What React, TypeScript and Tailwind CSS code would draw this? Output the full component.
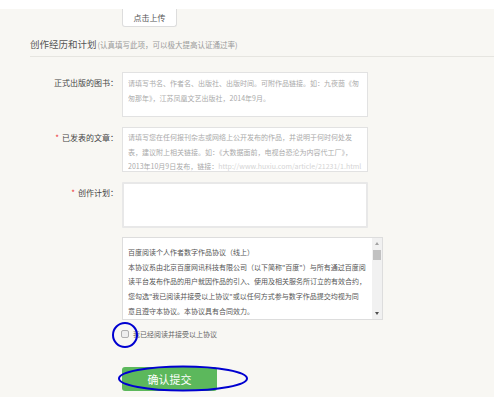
import React from 'react';

const Label: React.FC<{ text: string; required?: boolean }> = ({ text, required }) => (
    <div className="w-[118px] shrink-0 text-right pt-[6px] text-[8px] leading-[10px] text-[#444]">
        {required && <span className="text-[#e33] mr-[3px]">*</span>}
        {text}
    </div>
);

const Lines: React.FC<{ lines: React.ReactNode[] }> = ({ lines }) => (
    <>
        {lines.map((l, i) => (
            <div key={i} className="whitespace-nowrap overflow-hidden">{l}</div>
        ))}
    </>
);

const agreement = [
    '百度阅读个人作者数字作品协议（线上）',
    '本协议系由北京百度网讯科技有限公司（以下简称"百度"）与所有通过百度阅',
    '读平台发布作品的用户就因作品的引入、使用及相关服务所订立的有效合约，',
    '您勾选"我已阅读并接受以上协议"或以任何方式参与数字作品提交均视为同',
    '意且遵守本协议。本协议具有合同效力。',
];

export default function App() {
    return (
        <div className="relative w-[494px] h-[397px] overflow-hidden bg-[#f8f7f3] font-['Noto_Sans_CJK_SC',sans-serif] flex flex-col">
            <div className="h-[9px] bg-white shrink-0" />
            <div className="ml-[122px] w-[55px] h-[18px] shrink-0 bg-white border border-t-0 border-[#ddd] rounded-b-[3px] flex items-center justify-center text-[8px] text-[#555]">
                点击上传
            </div>

            <div className="ml-[30px] mt-[11px] h-[19px] shrink-0 border-b border-[#e6e5e0] flex items-start whitespace-nowrap">
                <div className="h-[12px] flex items-end leading-[12px]">
                    <span className="text-[9.5px] leading-[12px] text-[#555]">创作经历和计划</span>
                    <span className="text-[7.5px] leading-[11px] text-[#999] ml-[1px]">(认真填写此项，可以极大提高认证通过率)</span>
                </div>
            </div>

            <div className="mt-[15px] h-[45px] shrink-0 flex">
                <Label text="正式出版的图书：" />
                <div className="ml-[4px] w-[246px] h-[45px] bg-white border border-[#e2e2e2] px-[5px] pt-[3px] text-[7px] leading-[15px] text-[#aaa] overflow-hidden">
                    <Lines lines={[
                        '请填写书名、作者名、出版社、出版时间。可附作品链接。如：九夜茴《匆',
                        '匆那年》，江苏凤凰文艺出版社，2014年9月。',
                    ]} />
                </div>
            </div>

            <div className="mt-[10px] h-[45px] shrink-0 flex">
                <Label text="已发表的文章：" required />
                <div className="ml-[4px] w-[246px] h-[45px] bg-white border border-[#e2e2e2] px-[5px] pt-[2px] text-[7px] leading-[14.5px] text-[#aaa] overflow-hidden">
                    <Lines lines={[
                        '请填写您在任何报刊杂志或网络上公开发布的作品，并说明于何时何处发',
                        '表，建议附上相关链接。如：《大数据面前，电视台恐沦为内容代工厂》，',
                        <>2013年10月9日发布，链接：<span className="text-[#d4d4d4]">http://www.huxiu.com/article/21231/1.html</span></>,
                    ]} />
                </div>
            </div>

            <div className="mt-[10px] h-[46px] shrink-0 flex">
                <Label text="创作计划：" required />
                <div className="ml-[4px] w-[246px] h-[46px] bg-white border-2 border-[#e8e8e8] rounded-[1px]" />
            </div>

            <div className="mt-[9px] ml-[122px] w-[261px] h-[83px] shrink-0 bg-white border border-[#ddd] flex">
                <div className="flex-1 pl-[5px] pt-[7px] text-[7px] leading-[14.7px] text-[#555] overflow-hidden">
                    <Lines lines={agreement} />
                </div>
                <div className="w-[10px] bg-[#f1f1f1] flex flex-col items-center">
                    <div className="mt-[4px] w-0 h-0 border-x-[2px] border-x-transparent border-b-[3px] border-b-[#a3a3a3]" />
                    <div className="mt-[5px] w-[8px] h-[10px] bg-[#c1c1c1]" />
                    <div className="flex-1" />
                    <div className="mb-[4px] w-0 h-0 border-x-[2px] border-x-transparent border-t-[3px] border-t-[#505050]" />
                </div>
            </div>

            <div className="mt-[9px] ml-[121px] flex items-center h-[10px] shrink-0">
                <div className="w-[8px] h-[8px] bg-[#eee] border border-[#b0b0b0] rounded-[2px]" />
                <span className="ml-[4px] text-[7px] leading-[10px] text-[#666]">我已经阅读并接受以上协议</span>
            </div>

            <div className="mt-[28px] ml-[122px] w-[95px] h-[24px] shrink-0 bg-[#5cb85c] rounded-[3px] flex items-center justify-center text-white text-[11px]">
                确认提交
            </div>

            <svg className="absolute inset-0 pointer-events-none" width="494" height="397">
                <ellipse cx="125" cy="335" rx="12" ry="12" fill="none" stroke="#0000d0" strokeWidth="2" />
                <ellipse cx="183" cy="378.5" rx="64" ry="12" fill="none" stroke="#0000d0" strokeWidth="2" />
            </svg>
        </div>
    );
}
